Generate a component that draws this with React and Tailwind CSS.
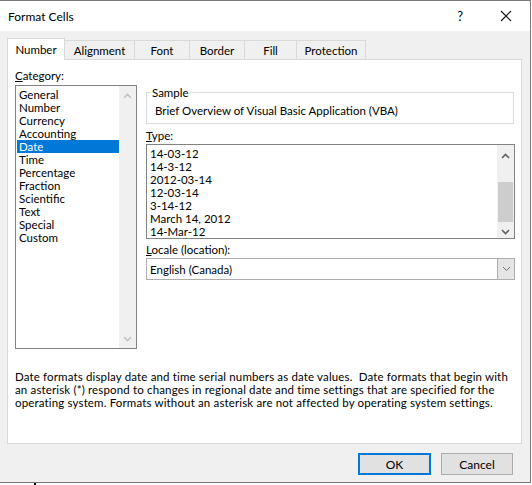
import React from 'react'

const categories = ['General', 'Number', 'Currency', 'Accounting', 'Date', 'Time', 'Percentage', 'Fraction', 'Scientific', 'Text', 'Special', 'Custom']
const types = ['14-03-12', '14-3-12', '2012-03-14', '12-03-14', '3-14-12', 'March 14, 2012', '14-Mar-12']
const tabs = [
  { label: 'Number', w: 'w-[58px]' },
  { label: 'Alignment', w: 'w-[70px]' },
  { label: 'Font', w: 'w-[55px]' },
  { label: 'Border', w: 'w-[55px]' },
  { label: 'Fill', w: 'w-[52px]' },
  { label: 'Protection', w: 'w-[69px]' },
]

function Chevron({ up, color = '#606060' }) {
  return (
    <svg width="9" height="6" viewBox="0 0 9 6" fill="none">
      <path d={up ? 'M1 5 L4.5 1.5 L8 5' : 'M1 1 L4.5 4.5 L8 1'} stroke={color} strokeWidth="1.6" />
    </svg>
  )
}

function Tab({ label, w, active }) {
  if (active) {
    return (
      <div className={`${w} h-[22px] -mb-px relative z-10 bg-white border-l border-t border-r border-[#d9d9d9] flex items-center justify-center pb-[1px]`}>
        {label}
      </div>
    )
  }
  return (
    <div className={`${w} h-[19px] border-t border-r border-[#d9d9d9] flex items-center justify-center pt-[1px]`}>
      {label}
    </div>
  )
}

export default function App() {
  return (
    <div className="w-[532px] h-[485px] bg-white overflow-hidden font-['Lato',sans-serif] text-[11.5px] leading-[13px] text-black">
      <div className="w-[531px] h-[483px] bg-[#f0f0f0] border-t border-r border-b border-[#7a7a7a] flex flex-col">
        {/* title bar */}
        <div className="h-[30px] bg-white flex items-center shrink-0">
          <span className="pl-[8px] text-[12px]">Format Cells</span>
          <span className="ml-auto text-[13px] mr-[37px]">?</span>
          <svg width="12" height="12" viewBox="0 0 12 12" className="mr-[18px]">
            <path d="M1 1 L11 11 M11 1 L1 11" stroke="#111" strokeWidth="1.1" />
          </svg>
        </div>

        {/* tabs */}
        <div className="mt-[7px] pl-[7px] flex items-end h-[21px]">
          {tabs.map((t, i) => (
            <Tab key={t.label} label={t.label} w={t.w} active={i === 0} />
          ))}
        </div>

        {/* panel */}
        <div className="ml-[7px] w-[515px] h-[385px] bg-white border border-[#d9d9d9] flex flex-col">
          <div className="flex pt-[9px] pl-[7px]">
            {/* category column */}
            <div className="flex flex-col">
              <div><span className="underline">C</span>ategory:</div>
              <div className="mt-[3px] w-[122px] h-[264px] border border-[#828282] flex">
                <div className="flex-1 pt-[1.5px] pl-[1px]">
                  {categories.map((c) => (
                    <div
                      key={c}
                      className={`h-[13px] pl-[2px] ${c === 'Date' ? 'bg-[#0078d7] text-white' : ''}`}
                    >
                      {c}
                    </div>
                  ))}
                </div>
                <div className="w-[17px] bg-[#f0f0f0] flex flex-col items-center justify-between pt-[7px] pb-[6px]">
                  <Chevron up color="#c2c2c2" />
                  <Chevron color="#c2c2c2" />
                </div>
              </div>
            </div>

            {/* right column */}
            <div className="ml-[9px] mt-[17px] flex flex-col w-[368px]">
              <fieldset className="border border-[#dcdcdc] w-[368px]">
                <legend className="ml-[4px] px-[1px]">Sample</legend>
                <div className="h-[24px] flex items-center pl-[8px] pb-[2px]">
                  Brief Overview of Visual Basic Application (VBA)
                </div>
              </fieldset>

              <div className="mt-[5px]"><span className="underline">T</span>ype:</div>
              <div className="mt-[2px] w-[369px] h-[95px] border border-[#828282] flex">
                <div className="flex-1 pt-[1.5px] pl-[3px]">
                  {types.map((t) => (
                    <div key={t} className="h-[13px]">{t}</div>
                  ))}
                </div>
                <div className="w-[17px] bg-[#f0f0f0] flex flex-col items-center">
                  <div className="h-[19px] flex items-center justify-center pt-[2px]">
                    <Chevron up />
                  </div>
                  <div className="w-[15px] h-[18px]" />
                  <div className="w-[15px] h-[40px] bg-[#cdcdcd]" />
                  <div className="flex-1 flex items-center justify-center pt-[3px]">
                    <Chevron />
                  </div>
                </div>
              </div>

              <div className="mt-[3.5px]"><span className="underline">L</span>ocale (location):</div>
              <div className="mt-[2.5px] w-[369px] h-[22px] border border-[#adadad] bg-white flex items-center">
                <span className="pl-[3px] flex-1">English (Canada)</span>
                <div className="w-[17px] h-[20px] bg-[#e5e5e5] border-l border-[#adadad] flex items-center justify-center">
                  <svg width="9" height="6" viewBox="0 0 9 6" fill="none">
                    <path d="M1 1 L4.5 4.5 L8 1" stroke="#707070" strokeWidth="1" />
                  </svg>
                </div>
              </div>
            </div>
          </div>

          <p className="mt-[21px] pl-[7px] tracking-[0.15px]">
            Date formats display date and time serial numbers as date values.&nbsp; Date formats that begin with
            <br />
            an asterisk (*) respond to changes in regional date and time settings that are specified for the
            <br />
            operating system. Formats without an asterisk are not affected by operating system settings.
          </p>
        </div>

        {/* buttons */}
        <div className="mt-[9px] flex justify-end pr-[17px] gap-[10px]">
          <button className="w-[73px] h-[22px] bg-[#e1e1e1] border-2 border-[#0078d7] text-[12px]">OK</button>
          <button className="w-[72px] h-[22px] bg-[#e1e1e1] border border-[#adadad] text-[12px]">Cancel</button>
        </div>
      </div>
      <div className="h-[2px] flex">
        <div className="ml-[34px] w-[2px] h-[2px] bg-black" />
      </div>
    </div>
  )
}
